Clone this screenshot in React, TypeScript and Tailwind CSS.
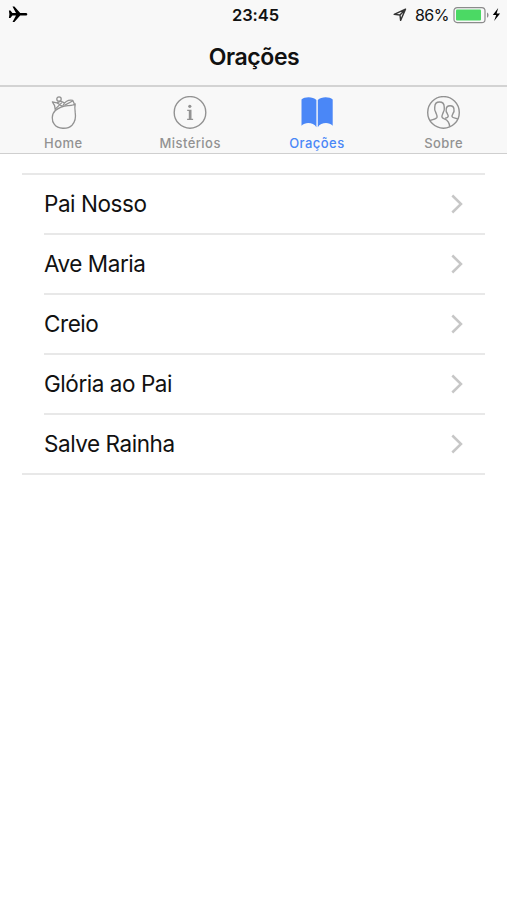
import type { ReactNode } from 'react';

const prayers = ['Pai Nosso', 'Ave Maria', 'Creio', 'Glória ao Pai', 'Salve Rainha'];

function HomeIcon() {
  return (
    <svg width="34" height="34" viewBox="0 0 34 34" fill="none" stroke="currentColor" strokeWidth="1.3" strokeLinejoin="round">
      <path d="M9.4 14.6C5.4 18.2 5.4 24.8 8.4 28.4C11.8 33.2 21.6 33.6 26 29.2C30.4 24.6 29.8 20 29.2 16.4C28.8 13.4 28.6 10.4 29.2 8C27.6 9.4 25 9.4 22 9.6C16 10 12.4 12 9.4 14.6Z" />
      <path d="M9.4 14.6L8.6 9.6L6.4 5.8L11 6.8L16.6 10.6M9 13.4L15.8 6.6" />
      <circle cx="13" cy="3" r="2.2" />
      <path d="M11 6.8L14.6 5.2L18.4 6.8M16.6 10.4C17.6 6.4 22 3.4 26.8 4.4L28.4 8M18.4 9.4L27 4.8" />
    </svg>
  );
}

function InfoIcon() {
  return (
    <svg width="34" height="34" viewBox="0 0 34 34" fill="currentColor">
      <circle cx="17" cy="16.4" r="15.8" fill="none" stroke="currentColor" strokeWidth="1.4" />
      <circle cx="16.8" cy="10.3" r="1.6" />
      <path d="M14.2 13.7h4.3v9.1h1.6v1.2h-6v-1.2h1.7v-7.8h-1.6z" />
    </svg>
  );
}

function BookIcon() {
  return (
    <svg width="34" height="34" viewBox="0 0 34 34" fill="currentColor">
      <path d="M1.5 3.5C4.5 .4 13 .2 16.4 4V31.2C13.5 26.5 5.5 25.6 1.5 29.7Z" />
      <path d="M32.7 3.5C29.7 .4 21.2 .2 17.8 4V31.2C20.7 26.5 28.7 25.6 32.7 29.7Z" />
    </svg>
  );
}

function PeopleIcon() {
  return (
    <svg width="34" height="34" viewBox="0 0 34 34" fill="none" stroke="currentColor" strokeWidth="1.4">
      <circle cx="16.5" cy="16.4" r="15.8" />
      <path d="M3 24.6C5 23.4 9.4 23.4 10 21.2C10.4 19.4 9.4 18.4 8.6 16C7.2 14.2 7.6 12.6 7.8 10.8C8 4.4 17 4.4 17.2 10.8C17.4 12.6 17.8 14.2 16.4 16C15.6 18.4 14.6 19.4 15 21.2C15.6 23.8 22.4 21.8 22.6 30.6" />
      <path d="M18 22.2C19.8 21.8 21.2 21.6 21.2 20.2C21.2 19 20.4 18.4 20 17C19 15.8 19 14.6 19.2 13.4C19.4 8.6 26.8 8.6 27 13.4C27.2 14.6 27.2 15.8 26.2 17C25.8 18.4 25 19 25 20.2C25.2 22.2 29 21.8 30.8 23" />
    </svg>
  );
}

function StatusBar() {
  return (
    <div className="grid h-[29px] grid-cols-3 items-center text-[16.5px] text-[#111]">
      <svg className="ml-2" width="20" height="18" viewBox="0 0 20 18" fill="#000">
        <path d="M.9 4.4h1.5L4.4 6.9h3.6L4.5.5h1.9l5.8 6.4h5.4c2.3 0 2.3 2.6 0 2.6h-5.4l-5.8 6.4H4.5L8 9.5H4.4L2.4 12H.9l.5-3.8z" />
      </svg>
      <span className="pl-[4px] pt-[2px] text-center font-semibold tracking-[-0.1px]">23:45</span>
      <div className="flex items-center justify-end pr-[5px]">
        <svg className="mr-[8px] shrink-0" width="14" height="14" viewBox="0 0 14 14" fill="none" stroke="#333" strokeWidth="1.4" strokeLinejoin="round">
          <path d="M12.5 1.2L1.2 6.4L7 7L7.6 12.4Z M7 7L12.5 1.2" />
        </svg>
        <span className="text-[16px] tracking-[-0.5px]">86%</span>
        <svg className="ml-1 shrink-0" width="49" height="18" viewBox="0 0 49 18">
          <rect x="1" y="1.6" width="31" height="15" rx="3.2" fill="none" stroke="#8b8b8b" strokeWidth="1.2" />
          <rect x="3" y="3.6" width="25" height="11" rx="1" fill="#4bd964" />
          <path d="M34 6.5c2 .8 2 4.4 0 5.2z" fill="#8b8b8b" />
          <path d="M45.2 2L39.8 9h3.4l-2.1 5.9 6-7.5h-3.5z" fill="#000" />
        </svg>
      </div>
    </div>
  );
}

function Tab({ icon, label, active }: { icon: ReactNode; label: string; active?: boolean }) {
  return (
    <button
      className={`flex flex-1 flex-col items-center pt-[9px] ${active ? 'text-[#4a87f7]' : 'text-[#929292]'}`}
    >
      {icon}
      <span className="mt-[5px] text-[13px] font-medium leading-4 tracking-[0.45px]">{label}</span>
    </button>
  );
}

function PrayerRow({ title, last }: { title: string; last: boolean }) {
  return (
    <li className={last ? '' : 'pl-[22px]'}>
      <div
        className={`flex h-[60px] items-center justify-between border-b-2 border-[#e8e8e8] pr-[22px] ${last ? 'pl-[22px]' : ''}`}
      >
        <span className="text-[22.5px] tracking-[-0.45px] text-[#111]">{title}</span>
        <svg width="13" height="20" viewBox="0 0 13 20" fill="none" stroke="#c7c7c7" strokeWidth="2.5">
          <path d="M2.3 1.5L11 10L2.3 18.5" />
        </svg>
      </div>
    </li>
  );
}

export default function App() {
  return (
    <div className="min-h-screen bg-white font-[Inter,'Liberation_Sans',sans-serif]">
      <header className="h-[87px] border-b-2 border-[#d3d3d3] bg-[#f8f8f8]">
        <StatusBar />
        <h1 className="pl-px pt-[11px] text-center text-[23px] font-semibold leading-[34px] tracking-[-0.4px] text-[#111]">
          Orações
        </h1>
      </header>
      <nav className="flex h-[67px] border-b border-[#cfcfcf] bg-[#f8f8f8]">
        <Tab icon={<HomeIcon />} label="Home" />
        <Tab icon={<InfoIcon />} label="Mistérios" />
        <Tab icon={<BookIcon />} label="Orações" active />
        <Tab icon={<PeopleIcon />} label="Sobre" />
      </nav>
      <ul className="mx-[22px] mt-[19px] border-t-2 border-[#e8e8e8]">
        {prayers.map((title, i) => (
          <PrayerRow key={title} title={title} last={i === prayers.length - 1} />
        ))}
      </ul>
    </div>
  );
}
